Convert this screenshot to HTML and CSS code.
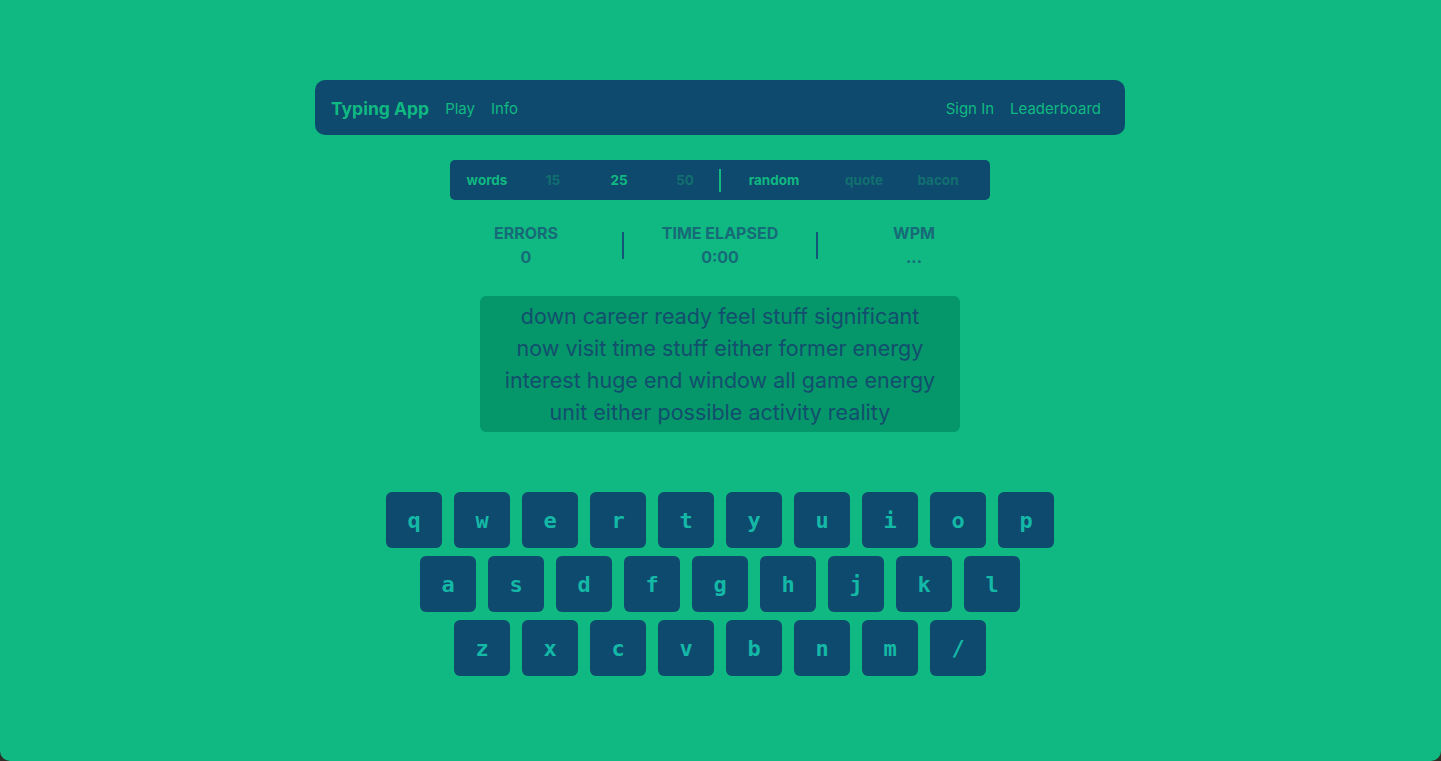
FILE: index.html
```html
<!DOCTYPE html>
<html lang="en">
<head>
<meta charset="utf-8">
<title>Typing App</title>
<link rel="stylesheet" href="styles.css">
</head>
<body>
<div class="page">
  <nav class="navbar">
    <div class="nav-left">
      <a class="brand">Typing App</a>
      <a class="nav-link">Play</a>
      <a class="nav-link">Info</a>
    </div>
    <div class="nav-right">
      <a class="nav-link">Sign In</a>
      <a class="nav-link">Leaderboard</a>
    </div>
  </nav>

  <div class="modebar">
    <div class="mode-group left">
      <span class="mode active">words</span>
      <span class="mode dim">15</span>
      <span class="mode active">25</span>
      <span class="mode dim">50</span>
    </div>
    <div class="mode-divider"></div>
    <div class="mode-group right">
      <span class="mode active w-random">random</span>
      <span class="mode dim w-quote">quote</span>
      <span class="mode dim w-bacon">bacon</span>
    </div>
  </div>

  <div class="stats">
    <div class="stat">
      <div class="stat-label">ERRORS</div>
      <div class="stat-value">0</div>
    </div>
    <div class="stat-divider"></div>
    <div class="stat">
      <div class="stat-label">TIME ELAPSED</div>
      <div class="stat-value">0:00</div>
    </div>
    <div class="stat-divider"></div>
    <div class="stat">
      <div class="stat-label">WPM</div>
      <div class="stat-value">...</div>
    </div>
  </div>

  <div class="textbox">
    <p>down career ready feel stuff significant<br>now visit time stuff either former energy<br>interest huge end window all game energy<br>unit either possible activity reality</p>
  </div>

  <div class="keyboard">
    <div class="krow">
      <div class="key">q</div><div class="key">w</div><div class="key">e</div><div class="key">r</div><div class="key">t</div><div class="key">y</div><div class="key">u</div><div class="key">i</div><div class="key">o</div><div class="key">p</div>
    </div>
    <div class="krow">
      <div class="key">a</div><div class="key">s</div><div class="key">d</div><div class="key">f</div><div class="key">g</div><div class="key">h</div><div class="key">j</div><div class="key">k</div><div class="key">l</div>
    </div>
    <div class="krow">
      <div class="key">z</div><div class="key">x</div><div class="key">c</div><div class="key">v</div><div class="key">b</div><div class="key">n</div><div class="key">m</div><div class="key">/</div>
    </div>
  </div>
</div>
</body>
</html>
```

FILE: styles.css
```css
html {
  background: #2e2f26;
}
body {
  margin: 0;
  font-family: Inter, "Noto Sans", "Liberation Sans", sans-serif;
}
.page {
  background: #10b981;
  min-height: 761px;
  box-sizing: border-box;
  border-radius: 0 0 10px 10px;
  padding: 80px 1px 0 0;
  display: flex;
  flex-direction: column;
  align-items: center;
}
a { text-decoration: none; }

.navbar {
  width: 810px;
  height: 55px;
  box-sizing: border-box;
  background: #0e4a6d;
  border-radius: 10px;
  display: flex;
  align-items: center;
  justify-content: space-between;
  padding: 1px 24px 0 16px;
  color: #10b981;
}
.nav-left, .nav-right {
  display: flex;
  align-items: center;
  gap: 16px;
}
.brand {
  font-weight: 700;
  font-size: 17.5px;
  color: #10b981;
}
.nav-link {
  font-size: 15px;
  color: #10b981;
}

.modebar {
  margin-top: 25px;
  width: 540px;
  height: 40px;
  box-sizing: border-box;
  background: #0e4a6d;
  border-radius: 5px;
  display: flex;
  align-items: center;
  padding: 0 4px 0 4px;
  font-size: 13.5px;
  font-weight: 700;
}
.mode-group { display: flex; align-items: center; }
.mode {
  width: 66px;
  text-align: center;
}
.mode.active { color: #10b981; }
.mode.dim { color: #11706f; }
.mode.w-random { width: 106px; }
.mode.w-quote { width: 74px; }
.mode.w-bacon { width: 74px; }
.mode-divider {
  width: 2px;
  height: 23px;
  background: #10b981;
  margin-left: 1px;
}

.stats {
  margin-top: 21px;
  display: flex;
  align-items: center;
  color: #176a78;
  font-weight: 700;
  font-size: 16px;
}
.stat {
  width: 192px;
  text-align: center;
  line-height: 24px;
}
.stat-divider {
  width: 2px;
  height: 27px;
  background: #15557a;
}

.textbox {
  margin-top: 27px;
  width: 480px;
  height: 136px;
  box-sizing: border-box;
  background: #059669;
  border-radius: 6px;
  display: flex;
  align-items: center;
  justify-content: center;
}
.textbox p {
  margin: 0;
  text-align: center;
  font-size: 21.5px;
  line-height: 32px;
  color: #134e6e;
}

.keyboard {
  margin-top: 60px;
  display: flex;
  flex-direction: column;
  align-items: center;
  gap: 8px;
}
.krow {
  display: flex;
  gap: 12px;
}
.key {
  width: 56px;
  height: 56px;
  border-radius: 6px;
  background: #0e4a6d;
  color: #14b8a6;
  font-family: "DejaVu Sans Mono", "Liberation Mono", monospace;
  font-weight: 700;
  font-size: 22px;
  display: flex;
  align-items: center;
  justify-content: center;
}
```
